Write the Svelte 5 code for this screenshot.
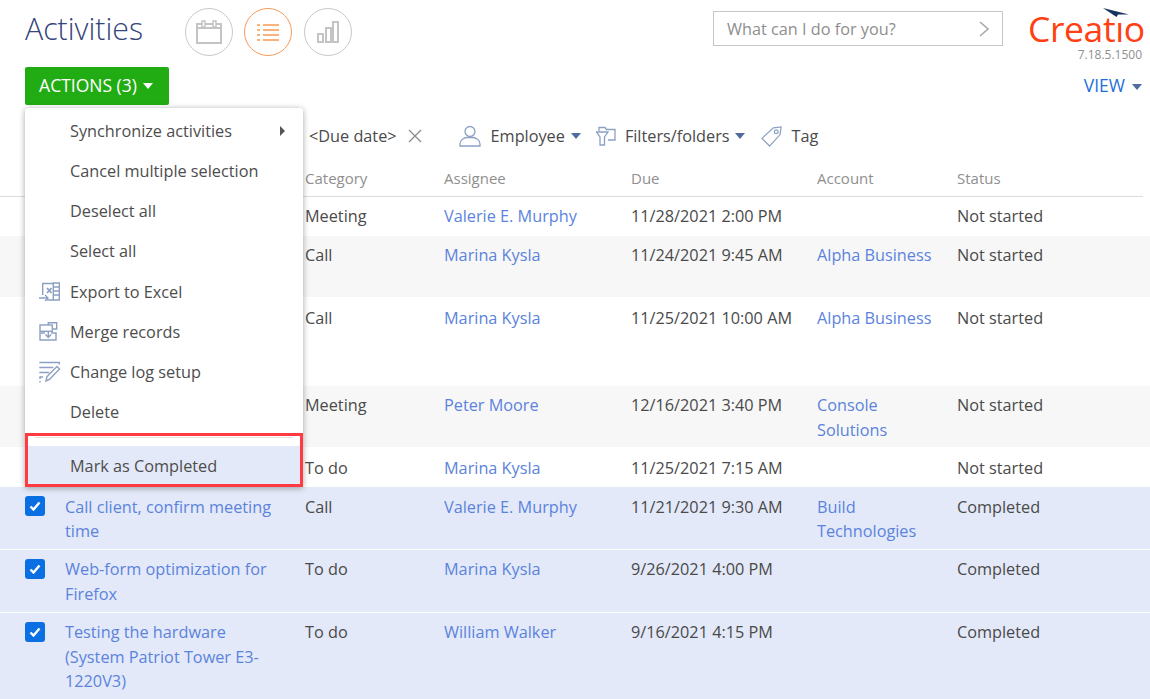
<script lang="ts">
  const menuItems = [
    { label: "Synchronize activities", icon: "", arrow: true },
    { label: "Cancel multiple selection", icon: "" },
    { label: "Deselect all", icon: "" },
    { label: "Select all", icon: "" },
    { label: "Export to Excel", icon: "excel" },
    { label: "Merge records", icon: "merge" },
    { label: "Change log setup", icon: "log" },
    { label: "Delete", icon: "" },
  ];

  const columns = ["", "", "Category", "Assignee", "Due", "Account", "Status"];

  const rows = [
    { h: 39, pt: 7, title: "", category: "Meeting", assignee: "Valerie E. Murphy", due: "11/28/2021 2:00 PM", account: "", status: "Not started" },
    { h: 61, pt: 7, alt: true, title: "", category: "Call", assignee: "Marina Kysla", due: "11/24/2021 9:45 AM", account: "Alpha Business", status: "Not started" },
    { h: 89, pt: 9, title: "", category: "Call", assignee: "Marina Kysla", due: "11/25/2021 10:00 AM", account: "Alpha Business", status: "Not started" },
    { h: 61, pt: 7, alt: true, title: "", category: "Meeting", assignee: "Peter Moore", due: "12/16/2021 3:40 PM", account: "Console Solutions", status: "Not started" },
    { h: 40, pt: 9, title: "", category: "To do", assignee: "Marina Kysla", due: "11/25/2021 7:15 AM", account: "", status: "Not started" },
    { h: 63, pt: 7.5, sel: true, title: "Call client, confirm meeting time", category: "Call", assignee: "Valerie E. Murphy", due: "11/21/2021 9:30 AM", account: "Build Technologies", status: "Completed" },
    { h: 63, pt: 7, sel: true, title: "Web-form optimization for Firefox", category: "To do", assignee: "Marina Kysla", due: "9/26/2021 4:00 PM", account: "", status: "Completed" },
    { h: 90, pt: 7, sel: true, title: "Testing the hardware (System Patriot Tower E3-1220V3)", category: "To do", assignee: "William Walker", due: "9/16/2021 4:15 PM", account: "", status: "Completed" },
  ];
</script>

<div class="page">
  <header class="top">
    <h1>Activities</h1>
    <div class="views">
      <button class="view-btn" aria-label="Calendar">
        <svg width="26" height="24" viewBox="0 0 26 24" fill="none" stroke="#c4c4c4" stroke-width="2">
          <rect x="1" y="4" width="24" height="19" />
          <path d="M1 8h24" />
          <rect x="6" y="1" width="3" height="6" fill="#fff" stroke-width="1.5" />
          <rect x="17" y="1" width="3" height="6" fill="#fff" stroke-width="1.5" />
        </svg>
      </button>
      <button class="view-btn active" aria-label="List">
        <svg width="22" height="18" viewBox="0 0 22 18" fill="none" stroke="#f9b27c" stroke-width="2">
          <path d="M0 2h3M6 2h16M0 7h3M6 7h16M0 12h3M6 12h16M0 17h3M6 17h16" />
        </svg>
      </button>
      <button class="view-btn" aria-label="Analytics">
        <svg width="22" height="22" viewBox="0 0 22 22" fill="none" stroke="#c4c4c4" stroke-width="2">
          <rect x="1" y="13" width="5" height="8" />
          <rect x="9" y="7" width="5" height="14" />
          <rect x="16" y="1" width="5" height="20" />
        </svg>
      </button>
    </div>
    <div class="search">
      <span>What can I do for you?</span>
      <svg width="10" height="16" viewBox="0 0 10 16" fill="none" stroke="#a9a9a9" stroke-width="1.6">
        <path d="M1 1l8 7-8 7" />
      </svg>
    </div>
    <div class="brand">
      <div class="logo">
        <span>Creatıo</span>
        <svg class="swoosh" width="27" height="10" viewBox="0 0 27 10">
          <path d="M0 0L26 6.500 15 6.500 13.500 9z" fill="#16335f" />
        </svg>
      </div>
      <div class="version">7.18.5.1500</div>
    </div>
  </header>

  <div class="actions-row">
    <div class="actions-wrap">
      <button class="actions">ACTIONS (3)<i class="caret white"></i></button>
      <div class="menu">
        {#each menuItems as item}
          <div class="menu-item">
            {#if item.icon === "excel"}
              <svg class="menu-icon" width="22" height="20" viewBox="0 0 22 20" fill="none" stroke="#8ca0c4" stroke-width="1.4">
                <path d="M3.700 13V1.500H14.300M8 18H14.300" />
                <path d="M14.300 1h6v17h-6zM14.300 5h6M14.300 9h6M14.300 13h6" />
                <path d="M8 6l4.500 5M12.500 6L8 11" stroke-width="1.800" />
                <path d="M0 16h9M6 13l3 3-3 3" />
              </svg>
            {:else if item.icon === "merge"}
              <svg class="menu-icon" width="20" height="20" viewBox="0 0 20 20" fill="none" stroke="#8ca0c4" stroke-width="1.4">
                <path d="M9.300 3V.700h8.400V7h-4.400" />
                <rect x="1" y="3" width="12.300" height="6.300" />
                <path d="M6 11H1v7h16v-7h-5" />
                <path d="M9.300 9.300v6M6.500 12.500l2.800 3 2.800-3" />
              </svg>
            {:else if item.icon === "log"}
              <svg class="menu-icon log" width="22" height="22" viewBox="0 0 22 22" fill="none" stroke="#8ca0c4" stroke-width="1.4">
                <path d="M.3 1.500h20v2M.3 6.500h14M.3 11.500h10M4 16H1v2M1 20v1.500" />
                <path d="M7 20l1-4.500L18 5.500l2.500 2.500L10.500 18.500z" />
              </svg>
            {/if}
            <span>{item.label}</span>
            {#if item.arrow}<i class="menu-arrow"></i>{/if}
          </div>
        {/each}
        <div class="menu-sep"></div>
        <div class="menu-item hover"><span>Mark as Completed</span></div>
        <div class="highlight"></div>
      </div>
    </div>
    <a class="view-link">VIEW<i class="caret blue"></i></a>
  </div>

  <div class="filters">
    <span class="due">&lt;Due date&gt;</span>
    <svg width="14" height="14" viewBox="0 0 14 14" stroke="#8a8a8a" stroke-width="1.2">
      <path d="M1 1l12 12M13 1L1 13" />
    </svg>
    <span class="filter employee">
      <svg width="22" height="22" viewBox="0 0 22 22" fill="none" stroke="#8ca0c4" stroke-width="1.3">
        <circle cx="11" cy="6.500" r="5" />
        <path d="M1 21v-2c0-4 4-6 6.500-6.500h7c2.500.5 6.500 2.500 6.500 6.500v2z" />
      </svg>
      Employee<i class="caret dark"></i>
    </span>
    <span class="filter folders">
      <svg width="20" height="20" viewBox="0 0 20 20" fill="none" stroke="#8ca0c4" stroke-width="1.3">
        <path d="M3 5V1.500h6l1.500 2H19V14h-7" />
        <path d="M.5 6H12L8.500 11v8H4v-8z" />
      </svg>
      Filters/folders<i class="caret dark"></i>
    </span>
    <span class="filter tag">
      <svg width="21" height="21" viewBox="0 0 22 22" fill="none" stroke="#8ca0c4" stroke-width="1.3">
        <path d="M1 13L13 2l8-1-1 8L9 21z" />
        <circle cx="16" cy="6" r="2" />
      </svg>
      Tag
    </span>
  </div>

  <div class="table">
    <div class="row head">
      {#each columns as col}<div>{col}</div>{/each}
    </div>
    {#each rows as row}
      <div class="row" class:alt={row.alt} class:sel={row.sel} style="height: {row.h}px; padding-top: {row.pt}px">
        <div>
          {#if row.sel}
            <span class="check" class:low={row.pt === 7.5}>
              <svg width="12" height="10" viewBox="0 0 12 10" fill="none" stroke="#fff" stroke-width="2.400">
                <path d="M1.500 5.500L4.500 8.500 10.500 1.500" />
              </svg>
            </span>
          {/if}
        </div>
        <div class="link title">{row.title}</div>
        <div>{row.category}</div>
        <div class="link">{row.assignee}</div>
        <div>{row.due}</div>
        <div class="link account">{row.account}</div>
        <div>{row.status}</div>
      </div>
    {/each}
  </div>
</div>

<style>
  :global(body) {
    margin: 0;
    background: #fff;
  }

  .page {
    width: 1150px;
    height: 699px;
    overflow: hidden;
    font-family: "Open Sans", "Liberation Sans", sans-serif;
    font-size: 16.25px;
    color: #4a4a4a;
  }

  button {
    font: inherit;
    cursor: pointer;
  }

  .top {
    display: flex;
    align-items: flex-start;
    height: 67px;
    padding-left: 25px;
    box-sizing: border-box;
  }

  h1 {
    margin: 7px 0 0;
    width: 160px;
    font-size: 30.3px;
    line-height: 44px;
    font-weight: 300;
    color: #35457a;
  }

  .views {
    display: flex;
    gap: 11px;
    margin-top: 8px;
  }

  .view-btn {
    width: 48px;
    height: 48px;
    padding: 0;
    display: flex;
    align-items: center;
    justify-content: center;
    background: #fff;
    border: 1px solid #c9c9c9;
    border-radius: 50%;
  }

  .view-btn:last-child {
    margin-left: 1px;
  }

  .view-btn.active {
    border-color: #f79a55;
  }

  .search {
    margin: 11px 0 0 361px;
    width: 290px;
    height: 35px;
    box-sizing: border-box;
    border: 1px solid #c6c6c6;
    display: flex;
    align-items: center;
    justify-content: space-between;
    padding: 0 13px;
    color: #8e8e8e;
  }

  .brand {
    margin-left: 25px;
    width: 121px;
    display: flex;
    flex-direction: column;
    align-items: flex-end;
  }

  .logo {
    position: relative;
    align-self: flex-start;
    margin-top: 10px;
    height: 37px;
    font-size: 35.5px;
    line-height: 37px;
    letter-spacing: -0.4px;
    color: #ff4013;
    white-space: nowrap;
  }

  .swoosh {
    position: absolute;
    left: 75px;
    top: -2px;
  }

  .version {
    margin-right: 7px;
    font-size: 12px;
    line-height: 15px;
    color: #8f8f8f;
  }

  .actions-row {
    display: flex;
    justify-content: space-between;
    padding: 0 8px 0 25px;
  }

  .actions-wrap {
    position: relative;
  }

  .actions {
    width: 144px;
    height: 38px;
    padding: 0 2px 2px 0;
    border: 0;
    border-radius: 2px;
    background: #22ac14;
    color: #fff;
    font-size: 17.5px;
    display: flex;
    align-items: center;
    justify-content: center;
  }

  .caret {
    display: inline-block;
    width: 0;
    height: 0;
    margin-left: 6px;
    border-left: 5.500px solid transparent;
    border-right: 5.500px solid transparent;
    border-top: 6px solid #fff;
  }

  .actions .caret {
    margin-top: 2px;
  }

  .caret.blue,
  .caret.dark {
    border-top-color: #4f6b9f;
  }

  .view-link .caret {
    margin-left: 7px;
    vertical-align: 2px;
  }

  .menu {
    position: absolute;
    z-index: 5;
    left: 0;
    top: 41px;
    width: 278px;
    height: 379px;
    background: #fff;
    border-radius: 3px 3px 0 0;
    box-shadow: 0 1px 6px rgba(0, 0, 0, 0.35);
    padding-top: 3px;
    box-sizing: border-box;
  }

  .menu-item {
    position: relative;
    height: 40px;
    line-height: 40px;
    padding-left: 45px;
    color: #4d4d4d;
  }

  .menu-item:nth-child(5) {
    margin-top: 1px;
  }

  .menu-item.hover {
    background: #e3e9f8;
  }

  .menu-icon {
    position: absolute;
    left: 14px;
    top: 10px;
  }

  .menu-icon.log {
    top: 9px;
  }

  .menu-arrow {
    position: absolute;
    right: 18px;
    top: 15px;
    width: 0;
    height: 0;
    border-top: 5px solid transparent;
    border-bottom: 5px solid transparent;
    border-left: 5px solid #555;
  }

  .menu-sep {
    height: 1px;
    margin: 5px 10px 8px;
    background: #e2e2e2;
  }

  .highlight {
    position: absolute;
    left: 0;
    right: 0;
    bottom: 0;
    height: 54px;
    box-sizing: border-box;
    border: 3px solid #ff3b41;
  }

  .view-link {
    margin-top: 8px;
    color: #1f6fd8;
    font-size: 17.5px;
    height: 20px;
    line-height: 20px;
  }

  .filters {
    display: flex;
    align-items: center;
    height: 30px;
    margin-top: 16px;
    padding-left: 309px;
    color: #4a4a4a;
  }

  .due {
    margin-right: 11px;
  }

  .filter {
    display: flex;
    align-items: center;
    gap: 10px;
  }

  .filter.employee {
    margin-left: 37px;
  }

  .filter.folders {
    margin-left: 15px;
    gap: 9px;
  }

  .filter.tag {
    margin-left: 16px;
  }

  .filter .caret {
    margin-left: -4px;
  }

  .table {
    margin-top: 14px;
  }

  .row {
    display: grid;
    grid-template-columns: 40px 240px 139px 187px 186px 140px 1fr;
    padding-left: 25px;
    line-height: 24.500px;
    box-sizing: border-box;
  }

  .row.head {
    height: 32px;
    margin-right: 7px;
    padding-top: 1px;
    font-size: 15px;
    color: #8f8f8f;
    border-bottom: 1px solid #dcdcdc;
  }

  .row.alt {
    background: #f7f7f7;
  }

  .row.sel {
    background: #e3e9f8;
    border-bottom: 1px solid #fff;
  }

  .link {
    color: #5b83dd;
  }

  .title {
    padding-right: 24px;
  }

  .account {
    padding-right: 20px;
  }

  .check {
    display: flex;
    align-items: center;
    justify-content: center;
    width: 20px;
    height: 20px;
    margin-top: 2px;
    border-radius: 3px;
    background: #0a6fe3;
  }

  .check.low {
    margin-top: 1.5px;
  }
</style>
